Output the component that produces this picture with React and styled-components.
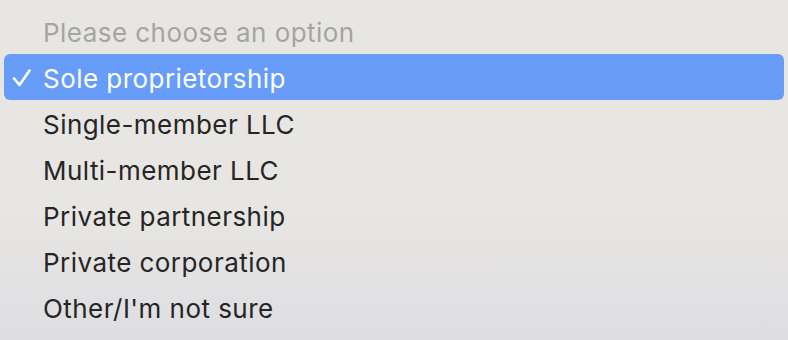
import React from 'react'
import styled, { createGlobalStyle } from 'styled-components'

const GlobalStyle = createGlobalStyle`
  html, body {
    margin: 0;
    padding: 0;
    background: #e8e6e2;
  }
`

const options = [
  'Single-member LLC',
  'Multi-member LLC',
  'Private partnership',
  'Private corporation',
  "Other/I'm not sure",
]

const CheckIcon = () => (
  <svg width="20" height="18" viewBox="0 0 20 18">
    <path
      d="M2 9.5 L7.5 16 L17.5 1.5"
      fill="none"
      stroke="#ffffff"
      strokeWidth="2.6"
      strokeLinecap="round"
      strokeLinejoin="round"
    />
  </svg>
)

const App = () => {
  return (
    <>
      <GlobalStyle />
      <Menu>
        <Item $disabled>
          <Check />
          <Label>Please choose an option</Label>
        </Item>
        <Item $selected>
          <Check>
            <CheckIcon />
          </Check>
          <Label>Sole proprietorship</Label>
        </Item>
        {options.map((o) => (
          <Item key={o}>
            <Check />
            <Label>{o}</Label>
          </Item>
        ))}
      </Menu>
    </>
  )
}

export default App

const Menu = styled.div`
  width: 788px;
  height: 340px;
  box-sizing: border-box;
  padding: 8px 4px 10px;
  display: flex;
  flex-direction: column;
  background: linear-gradient(180deg, #e8e6e2 0%, #e8e6e2 62%, #dedde2 100%);
  font-family: Inter, 'Liberation Sans', sans-serif;
`

const Item = styled.div`
  height: 46px;
  display: flex;
  align-items: center;
  border-radius: 6px;
  font-size: 26px;
  color: ${(p) => (p.$selected ? '#ffffff' : p.$disabled ? '#a5a4a2' : '#252525')};
  background: ${(p) => (p.$selected ? '#679df8' : 'transparent')};
`

const Check = styled.span`
  width: 39px;
  padding-left: 8px;
  box-sizing: border-box;
  display: flex;
  align-items: center;
  padding-top: 2px;
`

const Label = styled.span`
  letter-spacing: 0.45px;
  padding-top: 2px;
`
